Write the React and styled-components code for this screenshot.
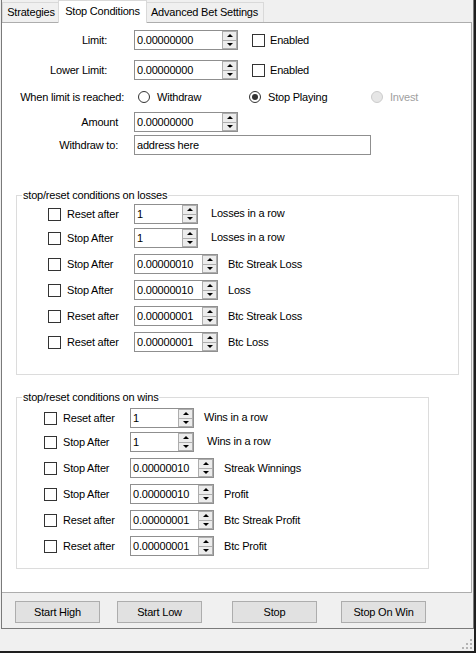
import React from 'react';
import styled, { createGlobalStyle } from 'styled-components';

const GlobalStyle = createGlobalStyle`
  html, body {
    margin: 0;
    padding: 0;
    background: #f0f0f0;
  }
  body {
    font-family: "Liberation Sans", Arial, sans-serif;
    font-size: 11px;
    letter-spacing: -0.2px;
    color: #000;
  }
`;

const Window = styled.div`
  box-sizing: border-box;
  width: 476px;
  height: 653px;
  background: #f0f0f0;
  border-right: 2px solid #1f1f1f;
  border-bottom: 2px solid #1f1f1f;
  display: flex;
  flex-direction: column;
`;

const Body = styled.div`
  box-sizing: border-box;
  margin-left: 1px;
  height: 629px;
  border: 1px solid #7a7a7a;
  border-top: none;
  display: flex;
  flex-direction: column;
`;

const TabStrip = styled.div`
  display: flex;
  align-items: flex-end;
  height: 22px;
`;

const Tab = styled.div`
  box-sizing: border-box;
  width: ${p => p.$w}px;
  height: ${p => (p.$active ? 23 : 20)}px;
  margin: 0 ${p => (p.$active ? -2 : 0)}px ${p => (p.$active ? -1 : 0)}px;
  padding-top: ${p => (p.$active ? 4 : 3)}px;
  text-align: center;
  background: ${p => (p.$active ? '#fff' : '#f0f0f0')};
  border: 1px solid #d9d9d9;
  border-bottom: none;
  position: relative;
  z-index: ${p => (p.$active ? 2 : 1)};
`;

const Page = styled.div`
  box-sizing: border-box;
  width: 470px;
  height: 571px;
  background: #fff;
  border: 1px solid #adadad;
  border-left: none;
  display: flex;
  flex-direction: column;
`;

const FormRow = styled.div`
  display: flex;
  align-items: center;
  height: 20px;
  margin-top: ${p => p.$mt}px;
`;

const FieldLabel = styled.div`
  width: ${p => p.$w}px;
  flex-shrink: 0;
  text-align: right;
`;

const NumBox = styled.div`
  box-sizing: border-box;
  display: flex;
  width: ${p => p.$w}px;
  height: 20px;
  margin-left: ${p => p.$ml || 0}px;
  border: 1px solid #8f8f8f;
  background: #fff;
  flex-shrink: 0;
`;

const NumValue = styled.div`
  flex: 1;
  padding-left: 2px;
  line-height: 18px;
  white-space: nowrap;
`;

const SpinCol = styled.div`
  box-sizing: border-box;
  display: flex;
  flex-direction: column;
  width: 15px;
  border: 1px solid #adadad;
  background: #ececec;
`;

const SpinBtn = styled.div`
  flex: 1;
  display: flex;
  align-items: center;
  justify-content: center;
  & + & {
    border-top: 1px solid #adadad;
  }
`;

const Arrow = styled.span`
  width: 0;
  height: 0;
  border-left: 3px solid transparent;
  border-right: 3px solid transparent;
  ${p => (p.$down ? 'border-top: 3px solid #000;' : 'border-bottom: 3px solid #000;')}
`;

const TextField = styled.div`
  box-sizing: border-box;
  width: ${p => p.$w}px;
  height: 20px;
  margin-left: ${p => p.$ml}px;
  padding-left: 2px;
  line-height: 18px;
  border: 1px solid #8f8f8f;
  background: #fff;
`;

const CheckBox = styled.span`
  box-sizing: border-box;
  display: inline-block;
  width: 13px;
  height: 13px;
  margin-left: ${p => p.$ml || 0}px;
  border: 1px solid #333;
  background: #fff;
  flex-shrink: 0;
`;

const CheckText = styled.span`
  margin-left: 5px;
`;

const Option = styled.div`
  display: flex;
  align-items: center;
  width: ${p => p.$w || 'auto'};
  margin-left: ${p => p.$ml || 0}px;
  color: ${p => (p.$disabled ? '#a0a0a0' : '#000')};
  flex-shrink: 0;
`;

const RadioDot = styled.span`
  box-sizing: border-box;
  width: 12px;
  height: 12px;
  margin-right: 7px;
  border-radius: 50%;
  border: 1px solid ${p => (p.$disabled ? '#cccccc' : '#333')};
  background: ${p => (p.$disabled ? '#e6e6e6' : '#fff')};
  display: flex;
  align-items: center;
  justify-content: center;
  &::after {
    content: '';
    width: 6px;
    height: 6px;
    border-radius: 50%;
    background: #333;
    display: ${p => (p.$checked ? 'block' : 'none')};
  }
`;

const Group = styled.fieldset`
  box-sizing: border-box;
  width: ${p => p.$w}px;
  margin: ${p => p.$mt}px 0 0 14px;
  padding: 0 0 ${p => p.$pb}px 0;
  border: 1px solid #dcdcdc;
  min-width: 0;
`;

const Caption = styled.legend`
  margin-left: 5px;
  padding: 0 1px;
  line-height: 13px;
`;

const RuleList = styled.div`
  display: flex;
  flex-direction: column;
  padding-left: ${p => p.$pl}px;
`;

const RuleRow = styled.div`
  display: flex;
  align-items: center;
  height: 20px;
  margin-top: ${p => p.$mt}px;
`;

const RuleAction = styled.span`
  width: 67px;
  margin-left: 6px;
  flex-shrink: 0;
`;

const RuleUnit = styled.span`
  margin-left: ${p => p.$gap}px;
  padding-bottom: ${p => (p.$raise ? 3 : 0)}px;
  white-space: nowrap;
`;

const ButtonBar = styled.div`
  display: flex;
  align-items: flex-start;
  padding-top: 8px;
`;

const ActionButton = styled.button`
  box-sizing: border-box;
  width: 85px;
  height: 22px;
  margin-left: ${p => p.$ml}px;
  padding: 0;
  background: #e1e1e1;
  border: 1px solid #adadad;
  font: inherit;
  letter-spacing: inherit;
  color: #000;
`;

const StatusStrip = styled.div`
  flex: 1;
  display: flex;
  justify-content: flex-end;
  align-items: flex-end;
  padding: 0 2px 2px 0;
`;

const Spinner = ({ value, width, ml }) => (
  <NumBox $w={width} $ml={ml}>
    <NumValue>{value}</NumValue>
    <SpinCol>
      <SpinBtn><Arrow /></SpinBtn>
      <SpinBtn><Arrow $down /></SpinBtn>
    </SpinCol>
  </NumBox>
);

const Grip = () => (
  <svg width="10" height="10" viewBox="0 0 10 10">
    {[[8, 0], [4, 4], [8, 4], [0, 8], [4, 8], [8, 8]].map(([x, y]) => (
      <rect key={x + '-' + y} x={x} y={y} width="2" height="2" fill="#b4b4b4" />
    ))}
  </svg>
);

const lossRules = [
  { mt: 2, action: 'Reset after', value: '1', wide: false, gap: 13, unit: 'Losses in a row', raise: true },
  { mt: 4, action: 'Stop After', value: '1', wide: false, gap: 13, unit: 'Losses in a row', raise: true },
  { mt: 6, action: 'Stop After', value: '0.00000010', wide: true, gap: 10, unit: 'Btc Streak Loss' },
  { mt: 6, action: 'Stop After', value: '0.00000010', wide: true, gap: 10, unit: 'Loss' },
  { mt: 6, action: 'Reset after', value: '0.00000001', wide: true, gap: 10, unit: 'Btc Streak Loss' },
  { mt: 6, action: 'Reset after', value: '0.00000001', wide: true, gap: 10, unit: 'Btc Loss' },
];

const winRules = [
  { mt: 4, action: 'Reset after', value: '1', wide: false, gap: 10, unit: 'Wins in a row', raise: true },
  { mt: 4, action: 'Stop After', value: '1', wide: false, gap: 13, unit: 'Wins in a row', raise: true },
  { mt: 6, action: 'Stop After', value: '0.00000010', wide: true, gap: 10, unit: 'Streak Winnings' },
  { mt: 6, action: 'Stop After', value: '0.00000010', wide: true, gap: 10, unit: 'Profit' },
  { mt: 6, action: 'Reset after', value: '0.00000001', wide: true, gap: 10, unit: 'Btc Streak Profit' },
  { mt: 6, action: 'Reset after', value: '0.00000001', wide: true, gap: 10, unit: 'Btc Profit' },
];

const RuleGroup = ({ title, rules, width, mt, pb, pl }) => (
  <Group $w={width} $mt={mt} $pb={pb}>
    <Caption>{title}</Caption>
    <RuleList $pl={pl}>
      {rules.map((r, i) => (
        <RuleRow key={i} $mt={r.mt}>
          <CheckBox />
          <RuleAction>{r.action}</RuleAction>
          <Spinner value={r.value} width={r.wide ? 84 : 64} />
          <RuleUnit $gap={r.gap} $raise={r.raise}>{r.unit}</RuleUnit>
        </RuleRow>
      ))}
    </RuleList>
  </Group>
);

const App = () => (
  <Window>
    <GlobalStyle />
    <Body>
      <TabStrip>
        <Tab $w={58}>Strategies</Tab>
        <Tab $w={89} $active>Stop Conditions</Tab>
        <Tab $w={119}>Advanced Bet Settings</Tab>
      </TabStrip>
      <Page>
        <FormRow $mt={7}>
          <FieldLabel $w={105}>Limit:</FieldLabel>
          <Spinner value="0.00000000" width={104} ml={27} />
          <CheckBox $ml={14} />
          <CheckText>Enabled</CheckText>
        </FormRow>
        <FormRow $mt={10}>
          <FieldLabel $w={105}>Lower Limit:</FieldLabel>
          <Spinner value="0.00000000" width={104} ml={27} />
          <CheckBox $ml={14} />
          <CheckText>Enabled</CheckText>
        </FormRow>
        <FormRow $mt={7}>
          <FieldLabel $w={122}>When limit is reached:</FieldLabel>
          <Option $ml={14} $w="111px">
            <RadioDot />Withdraw
          </Option>
          <Option $w="122px">
            <RadioDot $checked />Stop Playing
          </Option>
          <Option $disabled>
            <RadioDot $disabled />Invest
          </Option>
        </FormRow>
        <FormRow $mt={5}>
          <FieldLabel $w={116}>Amount</FieldLabel>
          <Spinner value="0.00000000" width={104} ml={16} />
        </FormRow>
        <FormRow $mt={3}>
          <FieldLabel $w={116}>Withdraw to:</FieldLabel>
          <TextField $w={237} $ml={16}>address here</TextField>
        </FormRow>
        <RuleGroup title="stop/reset conditions on losses" rules={lossRules} width={443} mt={34} pb={22} pl={31} />
        <RuleGroup title="stop/reset conditions on wins" rules={winRules} width={413} mt={16} pb={12} pl={27} />
      </Page>
      <ButtonBar>
        <ActionButton $ml={13}>Start High</ActionButton>
        <ActionButton $ml={17}>Start Low</ActionButton>
        <ActionButton $ml={30}>Stop</ActionButton>
        <ActionButton $ml={24}>Stop On Win</ActionButton>
      </ButtonBar>
    </Body>
    <StatusStrip>
      <Grip />
    </StatusStrip>
  </Window>
);

export default App;
